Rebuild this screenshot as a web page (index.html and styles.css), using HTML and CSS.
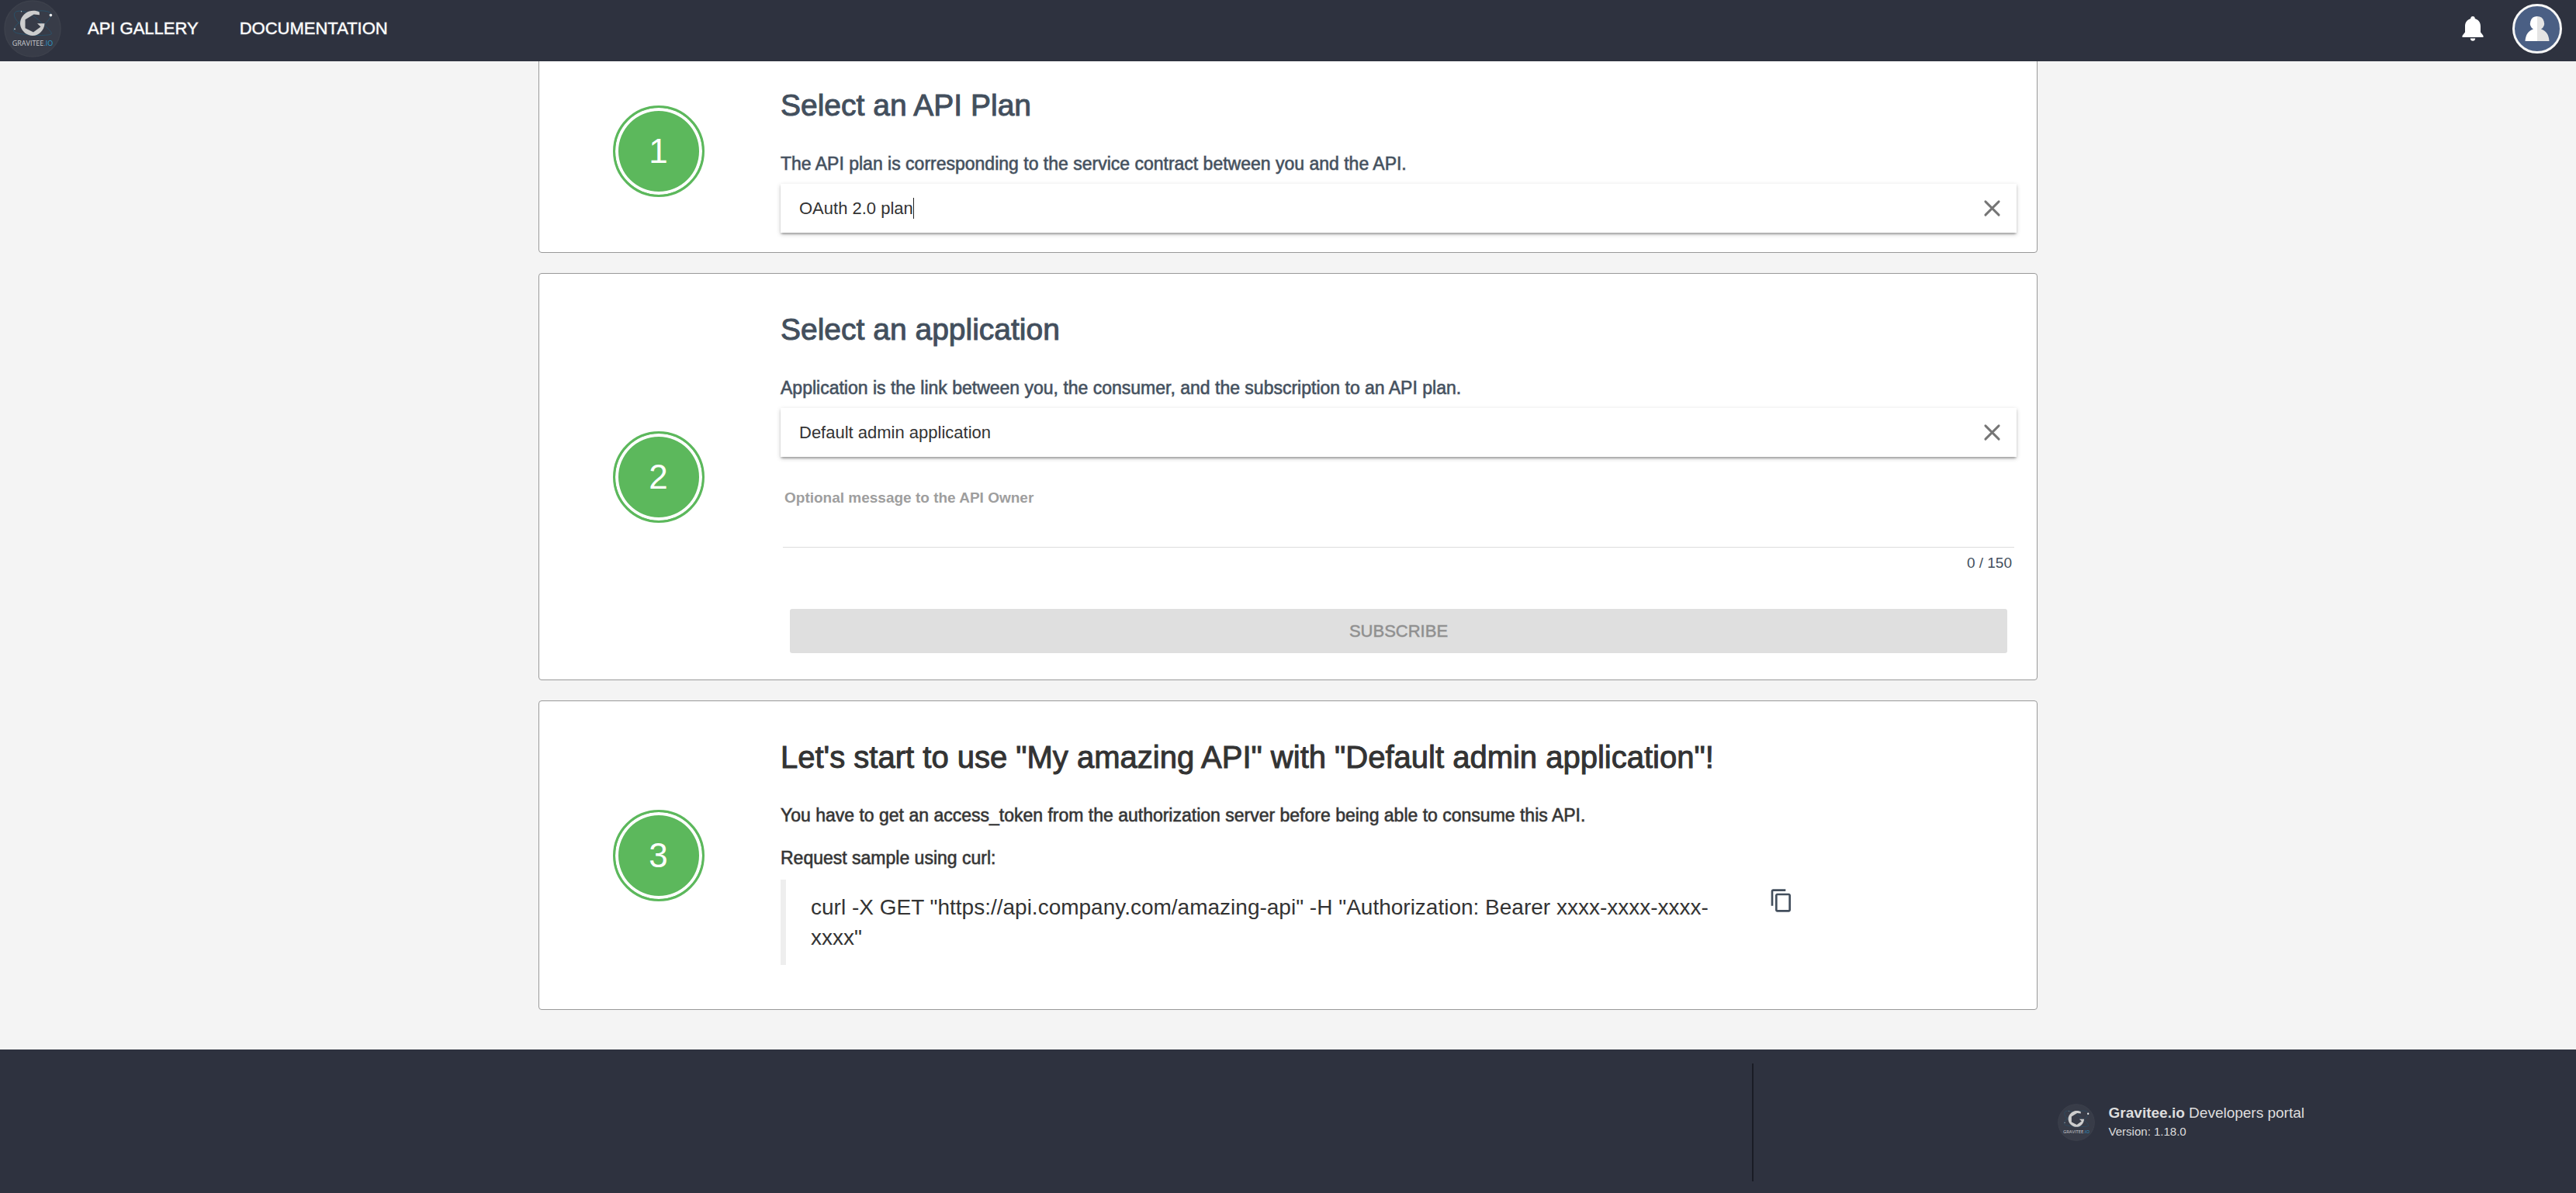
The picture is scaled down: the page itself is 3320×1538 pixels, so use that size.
FILE: index.html
```html
<!DOCTYPE html>
<html lang="en">
<head>
<meta charset="utf-8">
<title>Gravitee.io Developers portal</title>
<link rel="stylesheet" href="styles.css">
</head>
<body>
<header class="topbar">
  <a href="#" class="brand" aria-label="Gravitee.io">
    <svg class="logo" viewBox="0 0 74 74">
      <circle cx="37" cy="37" r="36" fill="#383c48" stroke="#3d414c" stroke-width="1.5"/>
      <g fill="none" stroke="#2b5169" stroke-width="1">
        <path d="M17 14.500C27 12 40 21 48 29C56 36 63 42 61 44C58 46 36 46 25 44C16 43 11 42 13 37C15 32 28 20 37 16C45 12 62 14 61 19C60 26 46 38 38 42"/>
        <path d="M17 14.500C9 17 15 28 27 36"/>
      </g>
      <path fill="#cdcdcd" d="M45.700 15.500C41 13 33 13 28 17C22 21.500 20 28 21.500 34C23.500 41 30 46 37 46C45.500 46 52 39 52.500 30.300H43L47.500 34.500L38 41.500L27.500 36.300V25.300L38.600 18.500L46 19.300Z"/>
      <circle cx="60.400" cy="19.600" r="1.800" fill="#e8e8e8"/>
      <circle cx="22.500" cy="14.800" r=".7" fill="#ccc"/>
      <circle cx="14" cy="37.400" r=".9" fill="#ccc"/>
      <text x="37" y="59" text-anchor="middle" class="logo-text">GRAVITEE<tspan class="logo-io">.IO</tspan></text>
    </svg>
  </a>
  <nav class="menu">
    <a href="#">API GALLERY</a>
    <a href="#">DOCUMENTATION</a>
  </nav>
  <button type="button" class="icon-button" aria-label="Notifications">
    <svg class="bell" viewBox="0 0 28 32"><path fill="#fff" d="M14 0c1.700 0 2.800 1.200 2.800 3 4.700 1.500 7.200 5 7.200 10v7.500l3.500 4.500v2H.5v-2L4 20.500V13c0-5 2.500-8.500 7.200-10 0-1.800 1.100-3 2.800-3zM10.800 28.500h6.400c0 2-1.500 3.300-3.200 3.300s-3.200-1.300-3.200-3.300z"/></svg>
  </button>
  <button type="button" class="icon-button" aria-label="User menu">
    <svg class="avatar" viewBox="0 0 64 64">
      <circle cx="32" cy="32" r="30.500" fill="#4a5f84" stroke="#f6f6f6" stroke-width="3"/>
      <path fill="#fff" d="M32 16a9 9 0 0 0-5 16.500C20.500 34.500 17 40 16.500 48H32z"/>
      <path fill="#e4e4e4" d="M32 16a9 9 0 0 1 5 16.500C43.500 34.500 47 40 47.500 48H32z"/>
    </svg>
  </button>
</header>

<main class="steps">
  <section class="card">
    <div class="step"><span class="badge">1</span></div>
    <div class="content">
      <h2>Select an API Plan</h2>
      <label class="lead" for="plan">The API plan is corresponding to the service contract between you and the API.</label>
      <div class="field">
        <input id="plan" type="text" value="OAuth 2.0 plan"><span class="caret"></span>
        <button type="button" class="clear" aria-label="Clear plan"><svg viewBox="0 0 24 24"><path d="M3 3L21 21M21 3L3 21" stroke="#757575" stroke-width="3" stroke-linecap="round"/></svg></button>
      </div>
    </div>
  </section>

  <section class="card card-form">
    <div class="step"><span class="badge">2</span></div>
    <div class="content">
      <h2>Select an application</h2>
      <label class="lead" for="app">Application is the link between you, the consumer, and the subscription to an API plan.</label>
      <div class="field">
        <input id="app" type="text" value="Default admin application">
        <button type="button" class="clear" aria-label="Clear application"><svg viewBox="0 0 24 24"><path d="M3 3L21 21M21 3L3 21" stroke="#757575" stroke-width="3" stroke-linecap="round"/></svg></button>
      </div>
      <div class="message">
        <label for="message">Optional message to the API Owner</label>
        <textarea id="message" maxlength="150" rows="1"></textarea>
        <div class="counter">0 / 150</div>
      </div>
      <button type="button" class="subscribe" disabled>SUBSCRIBE</button>
    </div>
  </section>

  <section class="card card-result">
    <div class="step"><span class="badge">3</span></div>
    <div class="content">
      <h2>Let's start to use "My amazing API" with "Default admin application"!</h2>
      <p class="lead">You have to get an access_token from the authorization server before being able to consume this API.</p>
      <p class="lead">Request sample using curl:</p>
      <div class="sample">
        <blockquote>curl -X GET "https://api.company.com/amazing-api" -H "Authorization: Bearer xxxx-xxxx-xxxx-xxxx"</blockquote>
        <button type="button" class="copy" aria-label="Copy">
          <svg viewBox="0 0 24 24"><path fill="#434f5d" d="M16 1H4c-1.100 0-2 .9-2 2v14h2V3h12V1zm3 4H8c-1.100 0-2 .9-2 2v14c0 1.100.9 2 2 2h11c1.100 0 2-.9 2-2V7c0-1.100-.9-2-2-2zm0 16H8V7h11v14z"/></svg>
        </button>
      </div>
    </div>
  </section>
</main>

<footer class="footer">
  <div class="about">
    <svg class="logo-small" viewBox="0 0 74 74">
      <circle cx="37" cy="37" r="36" fill="#383c48" stroke="#3d414c" stroke-width="1.5"/>
      <g fill="none" stroke="#2b5169" stroke-width="1">
        <path d="M17 14.500C27 12 40 21 48 29C56 36 63 42 61 44C58 46 36 46 25 44C16 43 11 42 13 37C15 32 28 20 37 16C45 12 62 14 61 19C60 26 46 38 38 42"/>
        <path d="M17 14.500C9 17 15 28 27 36"/>
      </g>
      <path fill="#cdcdcd" d="M45.700 15.500C41 13 33 13 28 17C22 21.500 20 28 21.500 34C23.500 41 30 46 37 46C45.500 46 52 39 52.500 30.300H43L47.500 34.500L38 41.500L27.500 36.300V25.300L38.600 18.500L46 19.300Z"/>
      <circle cx="60.400" cy="19.600" r="1.800" fill="#e8e8e8"/>
      <circle cx="22.500" cy="14.800" r=".7" fill="#ccc"/>
      <circle cx="14" cy="37.400" r=".9" fill="#ccc"/>
      <text x="37" y="59" text-anchor="middle" class="logo-text">GRAVITEE<tspan class="logo-io">.IO</tspan></text>
    </svg>
    <div>
      <div class="product"><strong>Gravitee.io</strong> Developers portal</div>
      <div class="version">Version: 1.18.0</div>
    </div>
  </div>
</footer>
</body>
</html>
```
FILE: styles.css
```css
* { box-sizing: border-box; }

body {
  margin: 0;
  min-height: 100vh;
  display: flex;
  flex-direction: column;
  background: #f4f4f4;
  color: #434f5d;
  font-family: "Liberation Sans", Arial, sans-serif;
  font-size: 22px;
}

button, input, textarea { font: inherit; color: inherit; border: 0; background: none; padding: 0; }
svg { display: block; }
.logo-text { font: 9px "Open Sans", sans-serif; fill: #c9cbd0; }
.logo-io { fill: #2e9bcb; }

/* Top bar */
.topbar {
  position: sticky;
  top: 0;
  z-index: 1;
  display: flex;
  align-items: center;
  height: 79px;
  padding: 0 18px 5px 5px;
  background: #2e323f;
}
.logo { width: 74px; height: 74px; }
.menu { display: flex; gap: 53px; margin: 0 auto 0 34px; }
.menu a { color: #fff; text-decoration: none; -webkit-text-stroke: 1px rgba(255, 255, 255, .5); }
.bell { width: 28px; height: 32px; margin-right: 37px; }
.avatar { width: 64px; height: 64px; }

/* Steps; the first card runs up under the sticky bar */
.steps {
  width: 60%;
  margin: -16px auto 0;
  padding: 0 30px 51px;
  display: flex;
  flex-direction: column;
  gap: 26px;
}
.card {
  display: flex;
  padding: 48px 26px 25px 0;
  background: #fff;
  border: 1px solid #999;
  border-radius: 4px;
}
.card-form { padding-bottom: 34px; }
.card-result { padding-bottom: 57px; color: #333; }
.step {
  flex: 0 0 307px;
  display: flex;
  align-items: center;
  justify-content: center;
  margin: -48px 4px -25px 0;
}
.card-form .step { margin-bottom: -34px; }
.card-result .step { margin-bottom: -57px; }
.badge {
  width: 118px;
  height: 118px;
  border: 3px solid #5cb85c;
  border-radius: 50%;
  box-shadow: inset 0 0 0 4px #fff;
  background: #5cb85c;
  color: #fff;
  font-size: 44px;
  line-height: 112px;
  text-align: center;
}
.content { flex: 1; min-width: 0; }

h2 {
  margin: 0 0 37px;
  font-size: 39px;
  font-weight: 400;
  line-height: 48px;
  -webkit-text-stroke: 1px #434f5d;
}
.card-result h2 { font-size: 40px; -webkit-text-stroke-color: #333; }
.lead {
  display: block;
  margin: 0 0 12px;
  font-size: 23px;
  line-height: 28px;
  -webkit-text-stroke: 1px rgba(67, 79, 93, .6);
}
.card-result .lead { margin: 0 0 27px; -webkit-text-stroke-color: rgba(51, 51, 51, .6); }
.card-result .lead + .lead { margin-bottom: 14px; }

.field {
  display: flex;
  align-items: center;
  height: 63px;
  padding: 0 20px 0 24px;
  background: #fff;
  box-shadow: 0 2px 6px rgba(0, 0, 0, .2), 0 2px 2px rgba(0, 0, 0, .14), 0 4px 2px -2px rgba(0, 0, 0, .12);
  color: #333;
}
.field input { field-sizing: content; outline: 0; }
.caret { width: 1px; height: 27px; background: #222; }
.clear { margin-left: auto; }
.clear svg { width: 23px; height: 23px; }

.message { padding: 41px 3px 47px; }
.message label {
  display: block;
  padding-left: 2px;
  color: #9e9e9e;
  font-size: 19px;
  font-weight: 700;
  line-height: 24px;
}
.message textarea {
  display: block;
  width: 100%;
  height: 52px;
  border-bottom: 1px solid #dcdcdc;
  resize: none;
}
.counter { padding: 8px 3px 0 0; font-size: 19px; line-height: 24px; text-align: right; }
.subscribe {
  display: block;
  width: calc(100% - 24px);
  height: 57px;
  margin: 0 auto;
  border-radius: 3px;
  background: #dfdfdf;
  color: #8f8f8f;
  -webkit-text-stroke: 1px rgba(143, 143, 143, .5);
}

.sample { display: flex; align-items: flex-start; }
blockquote {
  flex: 0 1 77%;
  margin: 0;
  padding: 16px 0 16px 32px;
  border-left: 7px solid #eee;
  font-size: 28px;
  line-height: 39px;
}
.copy { margin: 11px 0 0 47px; }
.copy svg { width: 32px; height: 32px; }

/* Footer */
.footer {
  flex: 1;
  display: flex;
  justify-content: flex-end;
  min-height: 185px;
  padding: 18px 0 15px;
  background: #2e323f;
  color: #dedede;
}
.about {
  flex: 0 0 32%;
  display: flex;
  align-items: center;
  justify-content: center;
  gap: 18px;
  padding-left: 42px;
  border-left: 2px solid #1a1c25;
}
.logo-small { width: 48px; height: 48px; }
.product { font-size: 19px; line-height: 24px; }
.version { font-size: 15px; line-height: 24px; }
```
